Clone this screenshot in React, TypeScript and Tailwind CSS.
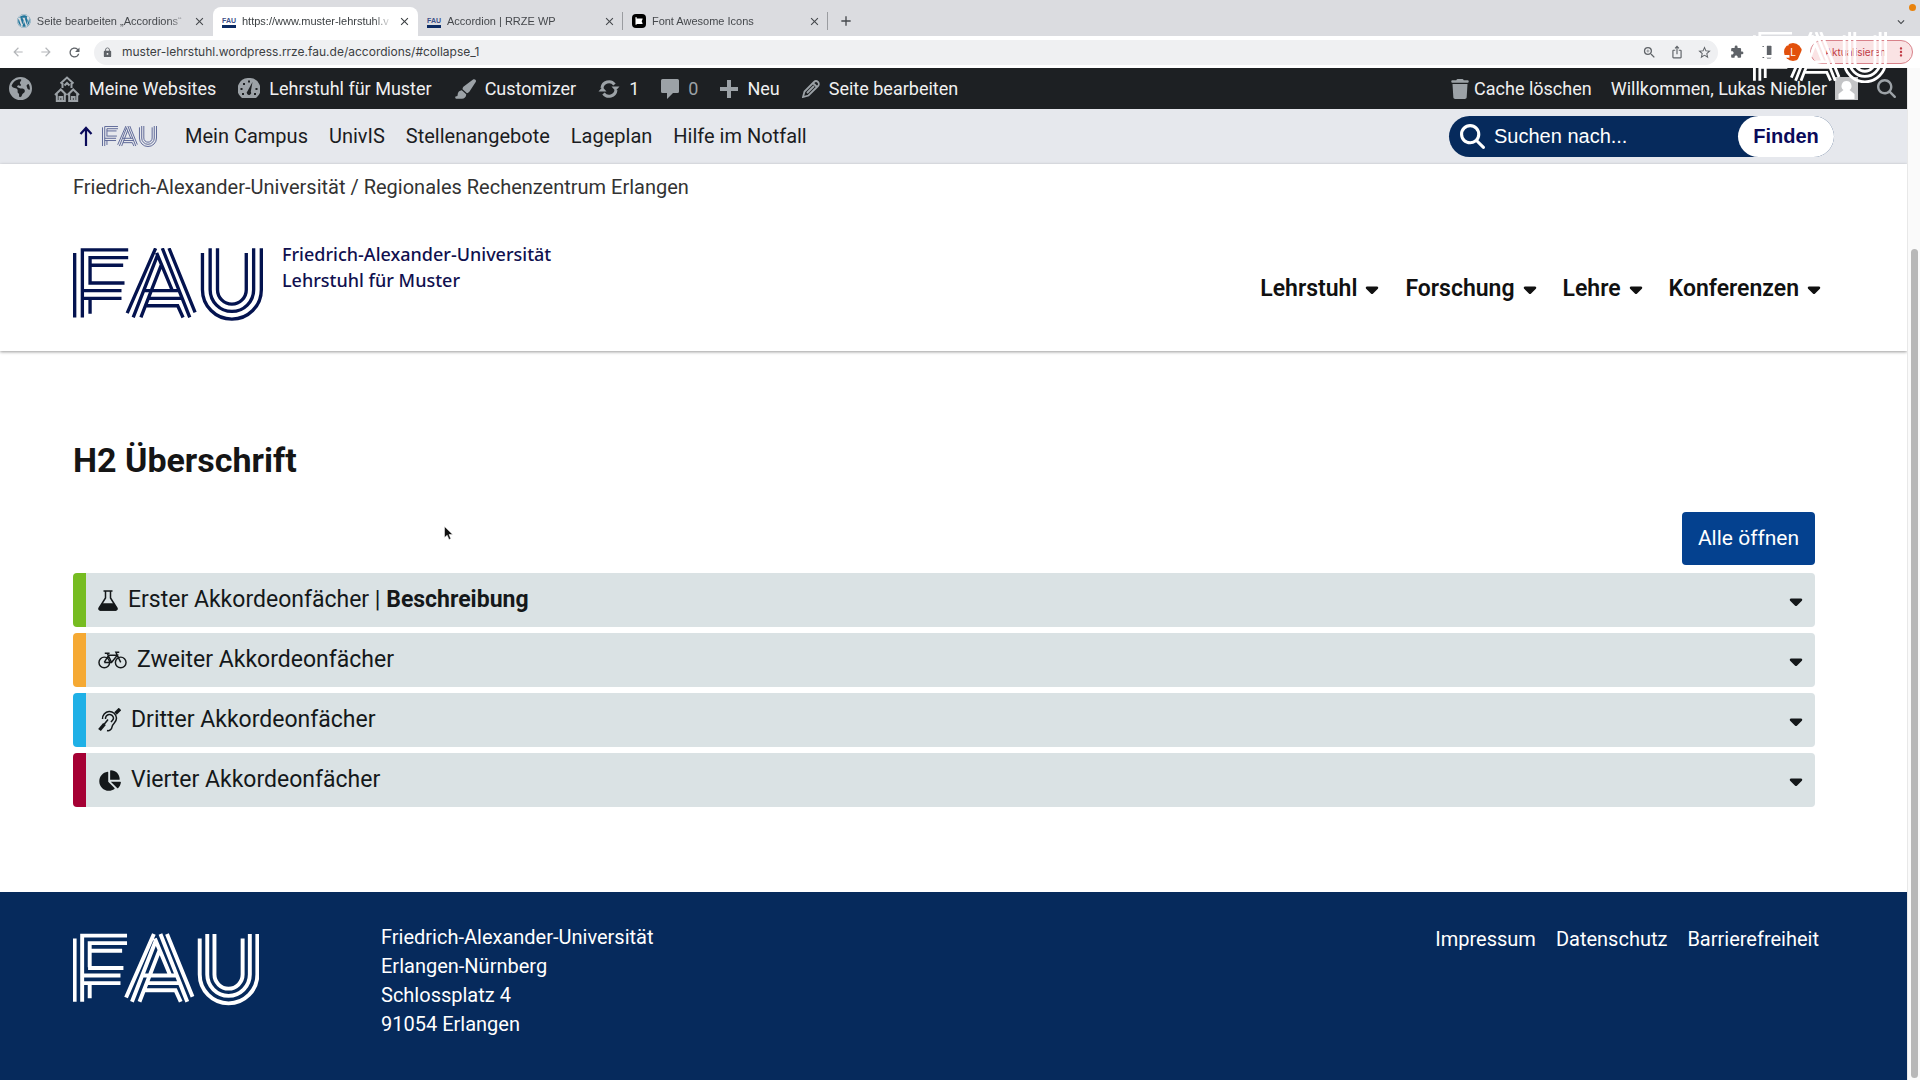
import type { ReactNode } from "react";
import {
  MdAdd,
  MdArrowBack,
  MdArrowForward,
  MdClose,
  MdExpandMore,
  MdExtension,
  MdIosShare,
  MdLock,
  MdMoreVert,
  MdRefresh,
  MdStarBorder,
  MdZoomIn,
} from "react-icons/md";
import {
  FaCaretDown,
  FaChartPie,
  FaEarthAmericas,
  FaFontAwesome,
  FaMagnifyingGlass,
  FaPaintbrush,
  FaTrash,
  FaWordpress,
} from "react-icons/fa6";

function FauLogo({ className, stroke = 10 }: { className: string; stroke?: number }) {
  return (
    <svg viewBox="0 0 568 217" fill="none" stroke="currentColor" strokeWidth={stroke} className={className} role="img" aria-label="FAU">
      <path d="M5 14V207M28 207V5H165M51 102V28H165M51 51H150M46 104H154M28 127H145M28 150H145M51 150V196" />
      <path d="M247 0L162 194M253 20L180 207M264 50L203 207M250 14L297 127M267 0L349 207M287 0L365 192M212 127H318M224 150H326M217 172H313L329 207" />
      <path d="M387 14V124A88 88 0 0 0 563 124V0M410 0V124A65 65 0 0 0 540 124V0M432 0V124A43 43 0 0 0 518 124V14" />
    </svg>
  );
}

function FauFavicon() {
  return (
    <span className="flex h-[14px] w-[14px] shrink-0 flex-col items-center justify-end">
      <span className="text-[7px] leading-[8px] font-bold text-[#3c4f88]">FAU</span>
      <span className="h-[3px] w-full bg-[#0b2a63]" />
    </span>
  );
}

const tabs = [
  { title: "Seite bearbeiten „Accordions“", icon: <FaWordpress className="text-[#21759b]" size={14} /> },
  { title: "https://www.muster-lehrstuhl.v", icon: <FauFavicon />, active: true },
  { title: "Accordion | RRZE WP", icon: <FauFavicon />, divider: true },
  { title: "Font Awesome Icons", icon: <FaFontAwesome className="rounded-sm bg-black p-[3px] text-white" size={14} />, divider: true },
];

function TabStrip() {
  return (
    <div className="relative flex h-9 items-end bg-[#dbdce0] pl-2 font-['Liberation_Sans',sans-serif] text-[11px] text-[#45484c]">
      {tabs.map((t) => (
        <div
          key={t.title}
          className={
            t.active
              ? "flex h-[29px] w-[205px] items-center gap-1.5 rounded-t-lg bg-white pr-[7px] pb-px pl-[9px] text-[#3c4043]"
              : "flex h-[29px] w-[205px] items-center gap-1.5 pb-px pl-[9px]"
          }
        >
          {t.icon}
          <span className="w-[152px] whitespace-nowrap [mask-image:linear-gradient(to_right,black_88%,transparent)]">{t.title}</span>
          <button aria-label="Tab schließen" className="ml-auto">
            <MdClose size={13} />
          </button>
          {!t.active && <span className={t.divider ? "h-[18px] w-px bg-[#9a9ca0]" : "h-[18px] w-px"} />}
        </div>
      ))}
      <button aria-label="Neuer Tab" className="mb-[7px] ml-2.5">
        <MdAdd size={16} />
      </button>
      <button aria-label="Tabs suchen" className="mr-3 mb-[7px] ml-auto">
        <MdExpandMore size={14} />
      </button>
      <span className="absolute top-1 right-1 h-[7px] w-[7px] rounded-full bg-[#e8820c]" />
    </div>
  );
}

function Toolbar() {
  return (
    <div className="flex h-8 items-center bg-white pr-[7px] pl-[11px] font-['Inter',sans-serif] text-[#5f6368]">
      <div className="flex items-center gap-3.5">
        <button aria-label="Zurück" className="text-[#b4b6b9]"><MdArrowBack size={14} /></button>
        <button aria-label="Vor" className="text-[#b4b6b9]"><MdArrowForward size={14} /></button>
        <button aria-label="Neu laden"><MdRefresh size={15} /></button>
      </div>
      <div className="ml-3 flex h-[25px] flex-1 items-center rounded-full bg-[#eff0f2] pr-1.5 pl-2">
        <MdLock size={11} />
        <input
          aria-label="Adresse"
          defaultValue="muster-lehrstuhl.wordpress.rrze.fau.de/accordions/#collapse_1"
          className="ml-[9px] flex-1 bg-transparent text-[12px] text-[#3c4043] outline-none"
        />
        <div className="flex items-center gap-[13px]">
          <MdZoomIn size={15} />
          <MdIosShare size={14} />
          <MdStarBorder size={15} />
        </div>
      </div>
      <MdExtension size={14} className="ml-3" />
      <svg viewBox="0 0 14 14" className="ml-3.5 h-3.5 w-3.5" fill="none" stroke="currentColor">
        <path d="M1 1.500h7M1 12.500h7M1.500 3v8" strokeDasharray="2 1.500" />
        <path d="M9 1h4v12H9z" fill="currentColor" />
      </svg>
      <span className="ml-3 flex h-[18px] w-[18px] items-center justify-center rounded-full bg-[#e2500c] text-[10px] text-white">L</span>
      <button className="ml-2 flex h-6 w-[103px] items-center justify-end rounded-full border border-[#d8828a] bg-[#fae3e4] pr-1 text-[10px] text-[#c03a45]">
        Aktualisieren
        <MdMoreVert size={14} className="ml-2" />
      </button>
    </div>
  );
}

function HousesIcon() {
  return (
    <svg viewBox="0 0 26 26" className="h-[26px] w-[26px]" fill="none" stroke="#9ca2a7" strokeWidth="2">
      <path d="M6.500 7.500L13 1.500l6.500 6M8.500 7v5M17.500 7v5M10.500 9.500L13 7l2.500 2.500" />
      <path d="M1 19l5.800-5.500 5.700 5.500M2.800 18v7h8v-7M5.500 25v-4h2.700v4" />
      <path d="M13.500 19l5.700-5.500L25 19M15.200 18v7h8v-7M17.900 25v-4h2.700v4" />
    </svg>
  );
}

function GaugeIcon() {
  return (
    <svg viewBox="0 0 22 21" className="h-[21px] w-[22px]">
      <path d="M11 0a11 11 0 0 1 8.500 18.500L18 20H4l-1.500-1.500A11 11 0 0 1 11 0z" fill="#9ca2a7" />
      <path d="M14.500 4L12.800 13.500a2.200 2.200 0 1 1-3.200-.5z" fill="#1d2023" />
      <path d="M10 2.500h2v2h-2zM5 5h2v2H5zM2.500 10h2v2h-2zM17.500 10h2v2h-2zM4 15h2v2H4zM16 15h2v2h-2z" fill="#1d2023" />
    </svg>
  );
}

function UpdateIcon() {
  return (
    <svg viewBox="0 0 22 20" className="h-5 w-[22px]" fill="none" stroke="#9ca2a7" strokeWidth="3">
      <path d="M4 9a7 7 0 0 1 12.500-3.500M18 11A7 7 0 0 1 5.500 14.500" />
      <path d="M13.500 7.500h8L17.500 12zM.500 12.500h8L4.500 8z" fill="#9ca2a7" stroke="none" />
    </svg>
  );
}

function CommentIcon() {
  return (
    <svg viewBox="0 0 18 20" className="h-5 w-[18px]" fill="#9ca2a7">
      <path d="M1.500 0h15A1.500 1.500 0 0 1 18 1.500v11a1.500 1.500 0 0 1-1.500 1.500H12l-6 6v-6H1.500A1.500 1.500 0 0 1 0 12.500v-11A1.500 1.500 0 0 1 1.500 0z" />
    </svg>
  );
}

function PlusIcon() {
  return (
    <svg viewBox="0 0 18 18" className="h-[18px] w-[18px]" stroke="#9ca2a7" strokeWidth="4">
      <path d="M9 0v18M0 9h18" />
    </svg>
  );
}

function PencilIcon() {
  return (
    <svg viewBox="0 0 18 18" className="h-[18px] w-[18px]" fill="none" stroke="#9ca2a7" strokeWidth="1.800">
      <path d="M1 17l1.500-5.500L12 2a2.500 2.500 0 0 1 4 4l-9.500 9.500zM5 13l7-7M11 3l4 4" />
    </svg>
  );
}

function AdminItem({ icon, children }: { icon: ReactNode; children: ReactNode }) {
  return (
    <a href="#" className="flex items-center gap-[9px]">
      <span className="text-[#9ca2a7]">{icon}</span>
      {children}
    </a>
  );
}

function AdminBar() {
  return (
    <nav className="flex h-[41px] items-center bg-[#1d2023] pr-[11px] pl-[9px] text-[18px] text-[#f0f0f1]">
      <div className="flex items-center gap-[22px]">
        <AdminItem icon={<FaEarthAmericas size={23} />}>{null}</AdminItem>
        <AdminItem icon={<HousesIcon />}>Meine Websites</AdminItem>
        <AdminItem icon={<GaugeIcon />}>Lehrstuhl für Muster</AdminItem>
        <AdminItem icon={<FaPaintbrush size={22} />}>Customizer</AdminItem>
        <AdminItem icon={<UpdateIcon />}>1</AdminItem>
        <AdminItem icon={<CommentIcon />}><span className="text-[#9ca2a7]">0</span></AdminItem>
        <AdminItem icon={<PlusIcon />}>Neu</AdminItem>
        <AdminItem icon={<PencilIcon />}>Seite bearbeiten</AdminItem>
      </div>
      <div className="ml-auto flex items-center gap-[19px]">
        <a href="#" className="flex items-center gap-1">
          <FaTrash size={20} className="text-[#9ca2a7]" />
          Cache löschen
        </a>
        <a href="#" className="flex items-center gap-2">
          Willkommen, Lukas Niebler
          <svg viewBox="0 0 23 23" className="h-[23px] w-[23px]">
            <path d="M0 0h23v23H0z" fill="#c3c4c6" />
            <path d="M11.500 4a5 5 0 0 1 3 9l5 4v5H3.500v-5l5-4a5 5 0 0 1 3-9z" fill="#fff" />
          </svg>
        </a>
        <button aria-label="Suchen" className="text-[#9ca2a7]"><FaMagnifyingGlass size={19} /></button>
      </div>
    </nav>
  );
}

const metaLinks = ["Mein Campus", "UnivIS", "Stellenangebote", "Lageplan", "Hilfe im Notfall"];

function MetaBar() {
  return (
    <div className="flex h-[55px] items-center bg-[#e6e8ed] px-[73px] pb-px text-[20px] text-[#1b1c22]">
      <a href="#" className="flex items-center gap-[9px] pl-1.5">
        <svg viewBox="0 0 14 20" className="h-5 w-3.5" fill="none" stroke="#0a0a5a" strokeWidth="2.200">
          <path d="M7 20V2M1.500 8L7 2l5.500 6" />
        </svg>
        <FauLogo className="h-[21px] w-[55px] text-[#5c6796]" />
      </a>
      <nav className="ml-7 flex gap-[21px]">
        {metaLinks.map((l) => (
          <a key={l} href="#">{l}</a>
        ))}
      </nav>
      <form className="ml-auto flex h-[41px] w-[385px] items-center rounded-full bg-[#062a5c] pl-[11px] font-['Liberation_Sans',sans-serif]">
        <FaMagnifyingGlass size={25} className="text-white" />
        <input
          aria-label="Suchen nach"
          placeholder="Suchen nach..."
          className="ml-[9px] w-0 flex-1 bg-transparent text-white outline-none placeholder:text-white"
        />
        <button className="h-[41px] w-[96px] rounded-full bg-white font-bold text-[#0a0a5a]">Finden</button>
      </form>
    </div>
  );
}

const mainNav = ["Lehrstuhl", "Forschung", "Lehre", "Konferenzen"];

function SiteHeader() {
  return (
    <header className="h-[187px] px-[73px] pt-[11px] shadow-[0_1px_3px_rgba(0,0,0,0.4)]">
      <p className="text-[20px] leading-6 text-[#333]">Friedrich-Alexander-Universität / Regionales Rechenzentrum Erlangen</p>
      <div className="mt-[49px] flex items-start">
        <FauLogo className="h-[73px] w-[190px] text-[#04134f]" />
        <p className="ml-[19px] -mt-[7px] font-['Noto_Sans',sans-serif] text-[18px] leading-[26px] font-medium text-[#10104f]">
          Friedrich-Alexander-Universität
          <br />
          Lehrstuhl für Muster
        </p>
        <nav className="mt-[25px] mr-[13px] ml-auto flex gap-[26px] text-[23px] leading-8 font-semibold text-[#111]">
          {mainNav.map((n) => (
            <a key={n} href="#" className="flex items-center gap-2">
              {n}
              <FaCaretDown className="h-5 w-3.5" />
            </a>
          ))}
        </nav>
      </div>
    </header>
  );
}

function FlaskIcon() {
  return (
    <svg viewBox="0 0 20 21" className="h-[21px] w-5 shrink-0" fill="none" stroke="currentColor" strokeWidth="1.500">
      <path d="M5.500 1h9M7.500 1v7L1.200 18a1.300 1.300 0 0 0 1.100 2h15.400a1.300 1.300 0 0 0 1.100-2L12.500 8V1" />
      <path d="M4.500 14h11l3 5-1 1H2.500l-1-1z" fill="currentColor" />
    </svg>
  );
}

function BicycleIcon() {
  return (
    <svg viewBox="0 0 30 18" className="h-[18px] w-[29px] shrink-0" fill="none" stroke="currentColor" strokeWidth="1.500">
      <circle cx="6.500" cy="11.500" r="5.500" />
      <circle cx="23.500" cy="11.500" r="5.500" />
      <path d="M6.500 11.500L11 4h9l-6 7.500H6.500M14 11.500L9.500 2M7 2h5M23.500 11.500L18.500 1H22" />
    </svg>
  );
}

function EarIcon() {
  return (
    <svg viewBox="0 0 23 24" className="h-6 w-[23px] shrink-0" fill="none" stroke="currentColor" strokeWidth="1.500">
      <path d="M4.500 11a7 7 0 0 1 14-1c0 5-4 5-4.500 9a4 4 0 0 1-5 3.500" />
      <path d="M7.500 11a4 4 0 0 1 8-1c0 2-1.500 2.500-2.500 4" />
      <path d="M1.500 22l5-6" strokeWidth="3.500" />
      <path d="M17.500 5.500L22 1" strokeWidth="3.500" />
      <path d="M6 16.500l4-5" />
    </svg>
  );
}

const panels = [
  { title: "Erster Akkordeonfächer | ", strong: "Beschreibung", icon: <FlaskIcon />, bar: "border-[#76bc21]" },
  { title: "Zweiter Akkordeonfächer", icon: <BicycleIcon />, bar: "border-[#f5a933]" },
  { title: "Dritter Akkordeonfächer", icon: <EarIcon />, bar: "border-[#1fb0e6]" },
  { title: "Vierter Akkordeonfächer", icon: <FaChartPie size={23} />, bar: "border-[#a50034]" },
];

function Accordions() {
  return (
    <main className="relative flex-1 pr-[92px] pl-[73px]">
      <h2 className="pt-[87px] text-[34px] leading-11 font-bold text-[#151515]">H2 Überschrift</h2>
      <svg viewBox="0 0 10 15" className="absolute top-[175px] left-[444px] h-[15px] w-2.5">
        <path d="M.5.500v11l2.700-2.300 1.800 4.300 1.800-.8-1.800-4.200h3.700z" fill="#111" stroke="#fff" strokeWidth=".5" />
      </svg>
      <div className="mt-[30px] flex justify-end">
        <button className="h-[53px] w-[133px] rounded bg-[#04418f] text-[21px] text-white">Alle öffnen</button>
      </div>
      <div className="mt-2 flex flex-col gap-1.5">
        {panels.map((p) => (
          <button
            key={p.title}
            className={`flex h-[54px] items-center rounded border-l-[13px] bg-[#dae2e4] px-3 text-left text-[23px] text-[#14181a] ${p.bar}`}
          >
            {p.icon}
            <span className="ml-2.5 whitespace-pre">
              {p.title}
              {p.strong && <strong>{p.strong}</strong>}
            </span>
            <FaCaretDown className="mt-0.5 ml-auto h-5 w-3.5" />
          </button>
        ))}
      </div>
    </main>
  );
}

function Footer() {
  return (
    <footer className="flex h-[188px] items-start bg-[#062a5c] px-[73px] text-[20px] text-white">
      <FauLogo className="mt-[41px] h-[73px] w-[186px]" stroke={12} />
      <address className="mt-[31px] ml-[122px] leading-[29px] not-italic">
        Friedrich-Alexander-Universität
        <br />
        Erlangen-Nürnberg
        <br />
        Schlossplatz 4
        <br />
        91054 Erlangen
      </address>
      <nav className="mt-[33px] mr-[15px] ml-auto flex gap-5 leading-[29px]">
        <a href="#">Impressum</a>
        <a href="#">Datenschutz</a>
        <a href="#">Barrierefreiheit</a>
      </nav>
    </footer>
  );
}

export default function App() {
  return (
    <div className="relative flex min-h-screen flex-col bg-white font-['Roboto',sans-serif]">
      <TabStrip />
      <Toolbar />
      <div className="flex flex-1">
        <div className="flex flex-1 flex-col">
          <AdminBar />
          <MetaBar />
          <SiteHeader />
          <Accordions />
          <Footer />
        </div>
        <div className="flex w-[13px] flex-col items-center border-l border-[#e8e8e8] bg-[#fafafa] pt-[181px] pb-0.5">
          <span className="w-[7px] flex-1 rounded-full bg-[#b8b8b8]" />
        </div>
      </div>
      <FauLogo className="absolute top-8 right-[33px] h-[51px] w-[134px] text-white" stroke={12} />
    </div>
  );
}
